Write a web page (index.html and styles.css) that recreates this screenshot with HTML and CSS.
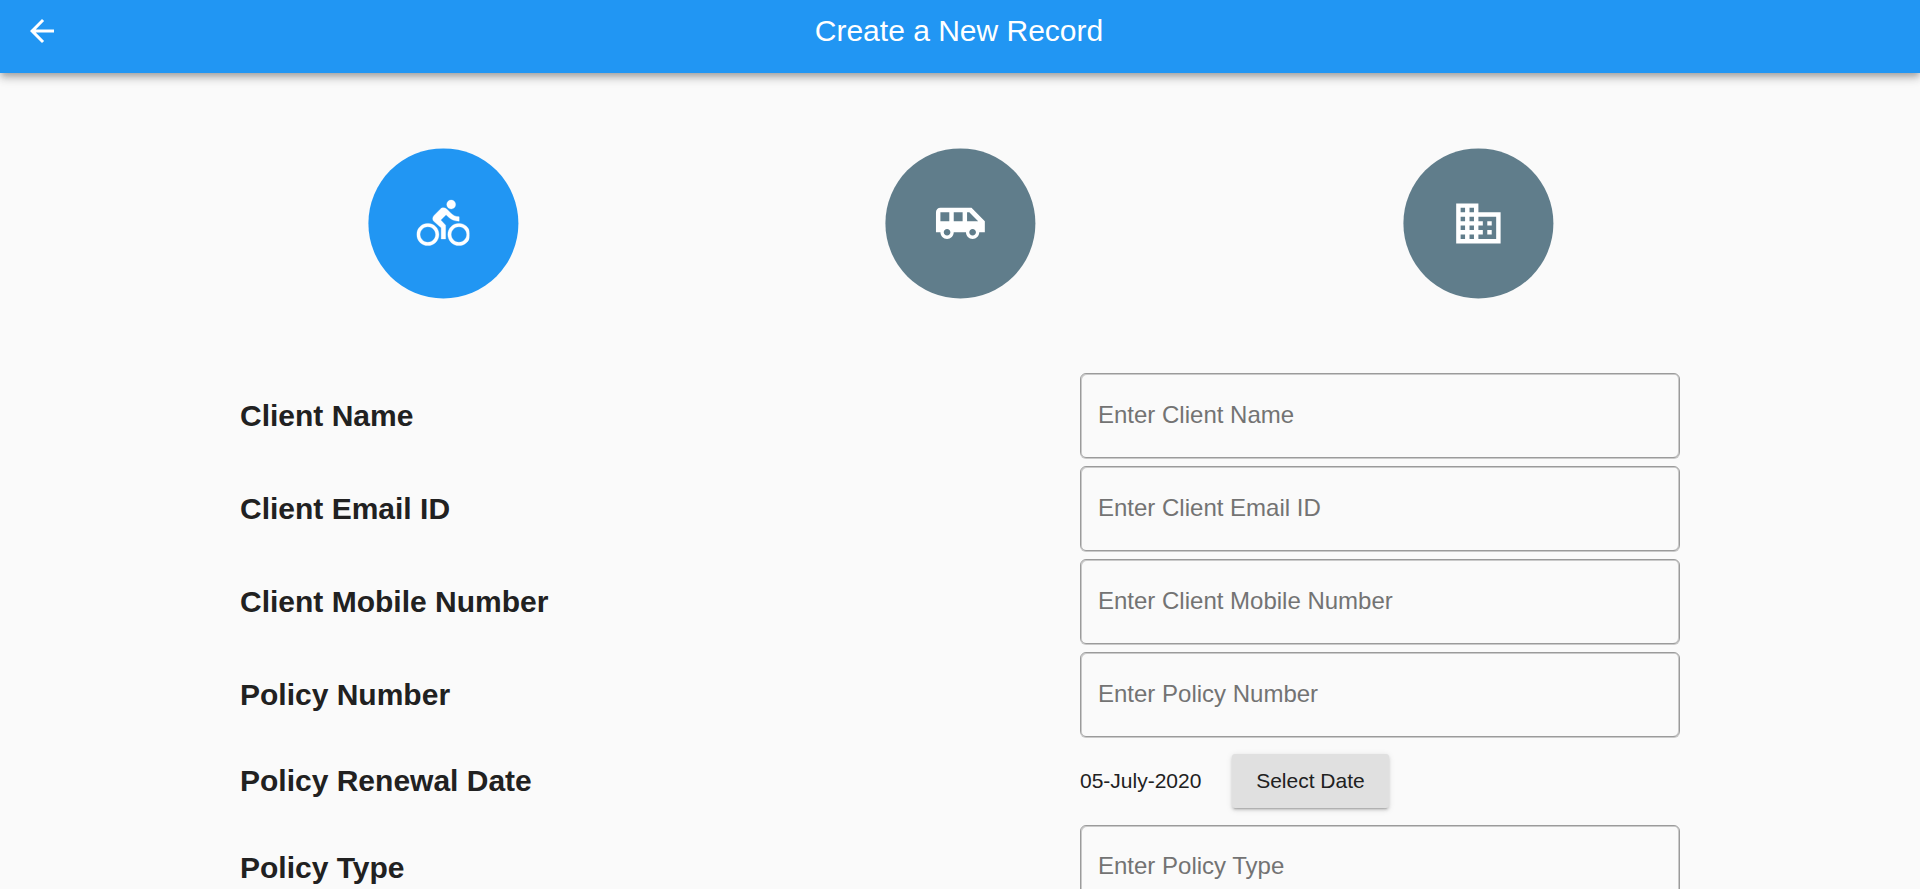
FILE: index.html
```
<!DOCTYPE html>
<html lang="en">
<head>
<meta charset="utf-8">
<title>Create a New Record</title>
<link rel="stylesheet" href="styles.css">
</head>
<body>
<header class="app-bar">
  <button class="back" aria-label="Back"><svg viewBox="0 0 24 24"><path d="M20 11H7.83l5.59-5.59L12 4l-8 8 8 8 1.41-1.41L7.83 13H20v-2z"/></svg></button>
  <h1 class="title">Create a New Record</h1>
</header>
<main class="page">
  <nav class="categories">
    <button class="category active" aria-label="Bike"><svg viewBox="0 0 24 24"><path d="M15.5 5.500c1.100 0 2-.9 2-2s-.9-2-2-2-2 .9-2 2 .9 2 2 2zM5 12c-2.800 0-5 2.200-5 5s2.200 5 5 5 5-2.200 5-5-2.200-5-5-5zm0 8.500c-1.900 0-3.500-1.600-3.500-3.500s1.600-3.500 3.500-3.500 3.500 1.600 3.500 3.500-1.600 3.500-3.500 3.500zm5.800-10l2.400-2.400.8.8c1.300 1.300 3 2.100 5.100 2.100V9c-1.500 0-2.700-.6-3.600-1.500l-1.900-1.900c-.5-.4-1-.6-1.600-.6s-1.100.2-1.400.6L7.800 8.400c-.4.4-.6.9-.6 1.400 0 .6.200 1.100.6 1.400L11 14v5h2v-6.200l-2.200-2.300zM19 12c-2.800 0-5 2.200-5 5s2.200 5 5 5 5-2.200 5-5-2.200-5-5-5zm0 8.500c-1.900 0-3.500-1.600-3.500-3.500s1.600-3.500 3.500-3.500 3.500 1.600 3.500 3.500-1.600 3.500-3.500 3.500z"/></svg></button>
    <button class="category" aria-label="Vehicle"><svg viewBox="0 0 24 24"><path d="M17 5H3c-1.100 0-2 .890-2 2v9h2c0 1.650 1.340 3 3 3s3-1.350 3-3h5.500c0 1.650 1.340 3 3 3s3-1.350 3-3H23v-5l-6-6zM3 11V7h4v4H3zm3 6.500c-.830 0-1.500-.670-1.500-1.500s.670-1.500 1.500-1.500 1.500.670 1.500 1.500-.670 1.500-1.500 1.500zm7-6.500H9V7h4v4zm4.500 6.500c-.830 0-1.500-.670-1.500-1.500s.670-1.500 1.500-1.500 1.500.670 1.500 1.500-.670 1.500-1.500 1.500zM15 11V7h1l4 4h-5z"/></svg></button>
    <button class="category" aria-label="Business"><svg viewBox="0 0 24 24"><path d="M12 7V3H2v18h20V7H12zM6 19H4v-2h2v2zm0-4H4v-2h2v2zm0-4H4V9h2v2zm0-4H4V5h2v2zm4 12H8v-2h2v2zm0-4H8v-2h2v2zm0-4H8V9h2v2zm0-4H8V5h2v2zm10 12h-8v-2h2v-2h-2v-2h2v-2h-2V9h8v10zm-2-8h-2v2h2v-2zm0 4h-2v2h2v-2z"/></svg></button>
  </nav>
  <form class="form">
    <div class="row"><label class="label" for="name">Client Name</label><input class="field" id="name" placeholder="Enter Client Name"></div>
    <div class="row"><label class="label" for="email">Client Email ID</label><input class="field" id="email" placeholder="Enter Client Email ID"></div>
    <div class="row"><label class="label" for="mobile">Client Mobile Number</label><input class="field" id="mobile" placeholder="Enter Client Mobile Number"></div>
    <div class="row"><label class="label" for="policy">Policy Number</label><input class="field" id="policy" placeholder="Enter Policy Number"></div>
    <div class="row date-row"><span class="label">Policy Renewal Date</span><div class="date"><span>05-July-2020</span><button type="button" class="select-date">Select Date</button></div></div>
    <div class="row type-row"><label class="label" for="type">Policy Type</label><input class="field" id="type" placeholder="Enter Policy Type"></div>
  </form>
</main>
</body>
</html>
```
FILE: styles.css
```
* { box-sizing: border-box; }
html, body { height: 100%; }
body {
  margin: 0;
  overflow: hidden;
  background: #fafafa;
  color: #212121;
  font-family: "Liberation Sans", Arial, sans-serif;
}
button { border: 0; padding: 0; font: inherit; color: inherit; }
.app-bar {
  position: relative;
  display: grid;
  grid-template-columns: 84px 1fr 84px;
  align-items: center;
  height: 73px;
  padding-bottom: 11px;
  background: #2196f3;
  color: #fff;
  box-shadow: 0 3px 6px -1.500px rgba(0,0,0,.2), 0 6px 7.500px rgba(0,0,0,.14), 0 1.500px 15px rgba(0,0,0,.12);
}
.back { display: flex; padding-left: 24px; background: none; }
.back svg { width: 36px; height: 36px; fill: currentColor; }
.title { margin: 0; padding-right: 2px; text-align: center; font-size: 30px; font-weight: 400; line-height: 36px; }
.categories {
  display: grid;
  grid-template-columns: repeat(3, 150px);
  justify-content: space-evenly;
  padding-top: 75px;
  height: 300px;
  transform: translate(.4px, .4px);
}
.category {
  display: flex;
  align-items: center;
  justify-content: center;
  width: 150px;
  height: 150px;
  border-radius: 50%;
  background: #607d8b;
  color: #fff;
}
.category.active { background: #2196f3; }
.category svg { width: 54px; height: 54px; padding: .35px; fill: currentColor; }
.category.active svg { stroke: currentColor; stroke-width: .15; }
.form { display: flex; flex-direction: column; gap: 7px; width: 1440px; margin: 0 auto; }
.row { display: grid; grid-template-columns: 1fr 600px; align-items: center; height: 86px; }
.label { padding-bottom: 1px; font-size: 30px; font-weight: 700; line-height: 36px; }
.field {
  width: 600px;
  height: 85px;
  align-self: start;
  padding: 0 17px 2px;
  border: 1px solid #9b9b9b;
  border-radius: 6px;
  background: transparent;
  box-shadow: inset 1px 1px 0 #cacaca, inset -1px 0 0 #cacaca, 0 1px 0 #cacaca;
  color: #212121;
  font: 24px "Liberation Sans", Arial, sans-serif;
  outline: 0;
}
.field::placeholder { color: #737373; opacity: 1; }
.type-row .field { padding-bottom: 4px; }
.date-row { height: 73px; padding-bottom: 1px; }
.date { display: flex; align-items: center; gap: 31px; font-size: 21px; }
.select-date {
  width: 157px;
  height: 54px;
  padding-right: 1px;
  border-radius: 3px;
  background: #e0e0e0;
  box-shadow: 0 3px 1.500px -2px rgba(0,0,0,.16), 0 2px 3px rgba(0,0,0,.14), 0 1.500px 6px rgba(0,0,0,.1);
}
```
